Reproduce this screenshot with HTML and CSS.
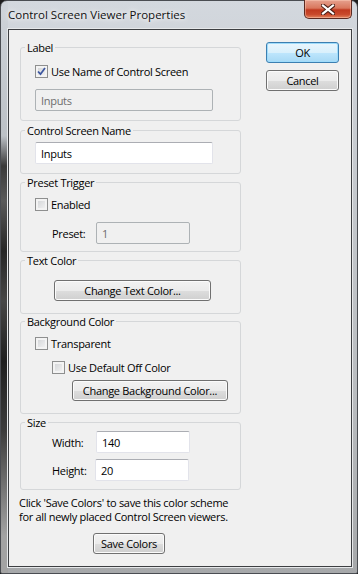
FILE: index.html
```html
<!DOCTYPE html>
<html lang="en">
<head>
  <meta charset="UTF-8" />
  <meta name="viewport" content="width=device-width, initial-scale=1" />
  <title>Control Screen Viewer Properties</title>
  <link rel="stylesheet" href="styles.css">
</head>
<body>

<div class="window">
  <div class="titlebar">
    <span class="title">Control Screen Viewer Properties</span>
    <button class="close-btn" aria-label="Close">
      <svg width="14" height="11" viewBox="0 0 14 11">
        <path d="M2 1.5 L12 9.5 M12 1.5 L2 9.5" stroke="#4a1d14" stroke-width="4.2" stroke-linecap="square" />
        <path d="M2 1.5 L12 9.5 M12 1.5 L2 9.5" stroke="#ffffff" stroke-width="2.2" stroke-linecap="square" />
      </svg>
    </button>
  </div>

  <div class="client">
    <div class="main">

      <fieldset class="group group-label">
        <legend>Label</legend>
        <label class="check-row row-first">
          <span class="checkbox checked">
            <svg width="9" height="9" viewBox="0 0 9 9">
              <path d="M1 4.5 L3.5 7.2 L8 1" fill="none" stroke="#3d57a0" stroke-width="1.8" />
            </svg>
          </span>
          Use Name of Control Screen
        </label>
        <input class="textbox textbox-wide" type="text" value="Inputs" disabled />
      </fieldset>

      <fieldset class="group group-name">
        <legend>Control Screen Name</legend>
        <input class="textbox textbox-wide" type="text" value="Inputs" />
      </fieldset>

      <fieldset class="group group-preset">
        <legend>Preset Trigger</legend>
        <label class="check-row row-first"><span class="checkbox"></span>Enabled</label>
        <div class="field-row preset-row">
          <span class="field-label">Preset:</span>
          <input class="textbox textbox-small" type="text" value="1" disabled />
        </div>
      </fieldset>

      <fieldset class="group group-text">
        <legend>Text Color</legend>
        <button class="btn btn-text-color">Change Text Color...</button>
      </fieldset>

      <fieldset class="group group-bg">
        <legend>Background Color</legend>
        <label class="check-row row-first"><span class="checkbox"></span>Transparent</label>
        <label class="check-row row-indent"><span class="checkbox"></span>Use Default Off Color</label>
        <button class="btn btn-bg-color">Change Background Color...</button>
      </fieldset>

      <fieldset class="group group-size">
        <legend>Size</legend>
        <div class="field-row width-row">
          <span class="field-label">Width:</span>
          <input class="textbox textbox-small" type="text" value="140" />
        </div>
        <div class="field-row height-row">
          <span class="field-label">Height:</span>
          <input class="textbox textbox-small" type="text" value="20" />
        </div>
      </fieldset>

      <p class="note">Click 'Save Colors' to save this color scheme<br>for all newly placed Control Screen viewers.</p>
      <button class="btn btn-save">Save Colors</button>
    </div>

    <div class="side">
      <button class="btn btn-default btn-ok">OK</button>
      <button class="btn btn-cancel">Cancel</button>
    </div>
  </div>
</div>

</body>
</html>
```

FILE: styles.css
```css
* {
  box-sizing: border-box;
}
body {
  margin: 0;
  width: 358px;
  height: 574px;
  overflow: hidden;
  background: #1e1e1e;
  font-family: "Open Sans", "Noto Sans", sans-serif;
  font-size: 11px;
  letter-spacing: -0.3px;
  color: #000;
}

/* window frame */
.window {
  width: 358px;
  height: 574px;
  display: flex;
  flex-direction: column;
  border-radius: 7px 7px 2px 2px;
  border: 1px solid #4a4d52;
  background:
    linear-gradient(to bottom, #cfd4da 0, #bcc1c6 135px, #3a3a3a 165px, #5a5a5a 200px, #262626 250px, #474747 300px, #1f1f1f 360px, #3c3c3c 430px, #868686 505px, #a3a3a3 535px) 0 0 / 7px 100% no-repeat,
    linear-gradient(to bottom, #d3d8de 0, #c9cdd2 120px, #b9bcbf 400px, #a6a8aa 100%);
}
.titlebar {
  height: 28px;
  display: flex;
  justify-content: space-between;
  padding-left: 7px;
}
.title {
  padding-top: 6px;
  font-size: 11.5px;
  letter-spacing: 0;
  line-height: 16px;
  color: #111;
  text-shadow: 0 0 8px #fff, 0 0 4px #fff;
}
.close-btn {
  width: 48px;
  height: 19px;
  margin-top: -1px;
  margin-right: 5px;
  padding: 0;
  display: flex;
  align-items: center;
  justify-content: center;
  border: 1px solid #5b2a21;
  border-top: none;
  border-radius: 0 0 5px 5px;
  background: linear-gradient(to bottom, #e6a18e 0, #d9775d 45%, #c0391f 55%, #c9492b 80%, #e2835d 100%);
  box-shadow: inset 0 0 0 1px rgba(255, 210, 190, 0.45);
}

.client {
  flex: 1;
  display: flex;
  margin: 0 5px 6px 7px;
  border: 1px solid #3d3f42;
  background: #f0f0f0;
  box-shadow: 0 0 0 1px #e6e8ea;
}
.main {
  width: 232px;
  padding: 10px 0 0 11px;
}
.side {
  display: flex;
  flex-direction: column;
  padding: 12px 0 0 25px;
}

/* group boxes */
.group {
  margin: 0;
  padding: 0 0 9px 14px;
  width: 221px;
  border: 1px solid #d5d7d9;
  border-radius: 3px;
}
.group legend {
  margin-left: -10px;
  padding: 0 2px;
  line-height: 15px;
}
.group-name { margin-top: 2px; }
.group-preset { margin-top: 1px; padding-bottom: 7px; }
.group-text { margin-top: 1px; padding-bottom: 12px; }
.group-bg { margin-top: 0; padding-bottom: 12px; }
.group-size { margin-top: 1px; padding-bottom: 8px; }

/* checkboxes */
.check-row {
  display: flex;
  align-items: center;
  height: 16px;
}
.row-first { margin-top: 6px; }
.group-label .row-first { margin-top: 8px; }
.row-indent {
  margin-top: 8px;
  padding-left: 17px;
}
.checkbox {
  width: 13px;
  height: 13px;
  margin-right: 3px;
  display: flex;
  align-items: center;
  justify-content: center;
  border: 1px solid #8e8f8f;
  background: linear-gradient(135deg, #cfd1d4 0, #f6f6f6 100%);
  box-shadow: inset 0 0 0 2px #f3f3f3;
}

/* text boxes */
.textbox {
  height: 22px;
  padding: 0 0 0 5px;
  font-family: inherit;
  font-size: 11px;
  letter-spacing: -0.3px;
  color: #000;
  background: #fff;
  border: 1px solid #e2e3ea;
  border-top-color: #abadb3;
  border-radius: 2px;
  outline: none;
}
.textbox:disabled {
  background: #f0f0f0;
  color: #6d6d6d;
  border-color: #adb2b5;
}
.textbox-wide {
  display: block;
  width: 178px;
}
.group-label .textbox-wide { margin-top: 10px; }
.group-name .textbox-wide { margin-top: 4px; }
.textbox-small {
  width: 94px;
}

.field-row {
  display: flex;
  align-items: center;
  padding-left: 17px;
}
.field-label {
  width: 44px;
}
.preset-row { margin-top: 10px; }
.width-row { margin-top: 1px; }
.height-row { margin-top: 6px; }
.height-row .textbox-small { margin-left: -1px; }

/* push buttons */
.btn {
  display: block;
  height: 21px;
  padding: 0;
  font-family: inherit;
  font-size: 11px;
  letter-spacing: -0.3px;
  color: #000;
  border: 1px solid #707070;
  border-radius: 3px;
  background: linear-gradient(to bottom, #f2f2f2 0, #ebebeb 50%, #dddddd 51%, #cfcfcf 100%);
  box-shadow: inset 0 0 0 1px #fbfbfb;
}
.btn-default {
  border-color: #3c7fb1;
  background: linear-gradient(to bottom, #eaf6fd 0, #d9f0fc 50%, #bee6fd 51%, #a7d9f5 100%);
  box-shadow: inset 0 0 0 1px #9fdcfb;
}
.btn-ok {
  width: 73px;
}
.btn-cancel {
  width: 73px;
  margin-top: 7px;
}
.btn-text-color {
  width: 157px;
  margin: 12px 0 0 19px;
}
.btn-bg-color {
  width: 156px;
  margin: 5px 0 0 37px;
}
.btn-save {
  width: 72px;
  margin: 9px 0 0 73px;
}

.note {
  margin: 6px 0 0 -1px;
  line-height: 14px;
  white-space: nowrap;
}
```
